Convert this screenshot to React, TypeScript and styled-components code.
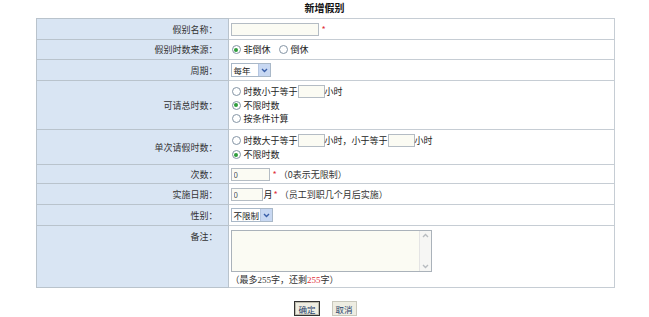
import React from 'react';
import styled, { createGlobalStyle } from 'styled-components';

const GlobalStyle = createGlobalStyle`
  body {
    margin: 0;
    background: #ffffff;
    font-family: "Noto Sans CJK SC", "Liberation Sans", sans-serif;
    font-size: 9px;
    color: #222222;
  }
`;

const Page = styled.div`
  width: 649px;
  display: flex;
  flex-direction: column;
  align-items: center;
`;

const Title = styled.div`
  height: 18px;
  line-height: 16px;
  font-size: 10px;
  font-weight: 700;
  color: #111111;
`;

const FormTable = styled.table`
  width: 579px;
  border-collapse: collapse;
  border: 1px solid #b9c3cc;
  margin-left: 1px;
`;

const Row = styled.tr<{ $h: number }>`
  height: ${(p) => p.$h}px;
`;

const Label = styled.td<{ $top?: boolean }>`
  width: 181px;
  padding: ${(p) => (p.$top ? '4px' : '0')} 10px 0 0;
  background: #d9e5f3;
  border: 1px solid #b9c3cc;
  text-align: right;
  vertical-align: ${(p) => (p.$top ? 'top' : 'middle')};
  color: #333333;
  white-space: nowrap;
`;

const Field = styled.td`
  padding: 0 0 0 2px;
  border: 1px solid #c6cdd4;
  background: #ffffff;
  vertical-align: middle;
`;

const Line = styled.div<{ $h?: number }>`
  display: flex;
  align-items: center;
  height: ${(p) => p.$h ?? 13}px;
  white-space: nowrap;
`;

const TextBox = styled.input<{ $w: number }>`
  width: ${(p) => p.$w}px;
  height: 13px;
  box-sizing: border-box;
  border: 1px solid #b4bcc4;
  background: #fbfbf3;
  padding: 0 2px;
  margin: 0;
  font-family: inherit;
  font-size: 8px;
  color: #555555;
  outline: none;
`;

const Star = styled.span`
  color: #e0303a;
  margin: 0 2px 0 3px;
`;

const Hint = styled.span`
  color: #333333;
`;

const RadioLabel = styled.label`
  display: inline-flex;
  align-items: center;
  margin-right: 7px;
`;

const Radio = styled.input.attrs({ type: 'radio' })`
  appearance: none;
  width: 9px;
  height: 9px;
  margin: 0 3px 0 1px;
  border: 1px solid #8595a5;
  border-radius: 50%;
  background: #ffffff;
  box-sizing: border-box;
  position: relative;
  &:checked::after {
    content: '';
    position: absolute;
    left: 1.5px;
    top: 1.5px;
    width: 4px;
    height: 4px;
    border-radius: 50%;
    background: #2f9e3c;
  }
`;

const SelectBox = styled.div<{ $w: number }>`
  width: ${(p) => p.$w}px;
  height: 14px;
  box-sizing: border-box;
  display: flex;
  align-items: center;
  border: 1px solid #a9b8c8;
  background: #ffffff;
  padding-left: 2px;
  font-size: 8.5px;
  color: #222222;
`;

const SelectText = styled.span`
  flex: 1;
`;

const SelectArrow = styled.span`
  width: 11px;
  height: 12px;
  display: flex;
  align-items: center;
  justify-content: center;
  background: #c8d8f2;
  border-left: 1px solid #b5c6e0;
`;

const TextArea = styled.div`
  width: 201px;
  height: 42px;
  margin-top: 4px;
  box-sizing: border-box;
  border: 1px solid #aab2ba;
  background: #fbfbf3;
  display: flex;
  justify-content: flex-end;
`;

const ScrollBar = styled.div`
  width: 11px;
  display: flex;
  flex-direction: column;
  justify-content: space-between;
  align-items: center;
  border-left: 1px solid #e4e4e4;
  background: #f6f6f4;
  padding: 2px 0;
`;

const Note = styled.div`
  height: 15px;
  display: flex;
  align-items: center;
  color: #333333;
`;

const Num = styled.span<{ $red?: boolean }>`
  font-family: "Liberation Serif", serif;
  color: ${(p) => (p.$red ? '#e0303a' : 'inherit')};
`;

const Buttons = styled.div`
  display: flex;
  gap: 12px;
  margin-top: 13px;
  margin-left: 2px;
`;

const Button = styled.button<{ $primary?: boolean }>`
  height: 15px;
  padding: 0 3px;
  font-family: inherit;
  font-size: 8.5px;
  color: #1f3f6a;
  background: #eeede2;
  border: 1px solid ${(p) => (p.$primary ? '#333333' : '#c9c8bc')};
  box-shadow: ${(p) => (p.$primary ? 'inset 0 0 0 1px #bdbcae' : 'none')};
  line-height: 12px;
`;

const Chevron = ({ up, color }: { up?: boolean; color: string }) => (
  <svg width="7" height="5" viewBox="0 0 7 5">
    <path
      d={up ? 'M1 4 L3.5 1.5 L6 4' : 'M1 1 L3.5 3.5 L6 1'}
      fill="none"
      stroke={color}
      strokeWidth="1.4"
    />
  </svg>
);

const Select = ({ value, width }: { value: string; width: number }) => (
  <SelectBox $w={width}>
    <SelectText>{value}</SelectText>
    <SelectArrow>
      <Chevron color="#3a5fa8" />
    </SelectArrow>
  </SelectBox>
);

const App: React.FC = () => (
  <>
    <GlobalStyle />
    <Page>
      <Title>新增假别</Title>
      <FormTable>
        <tbody>
          <Row $h={21}>
            <Label>假别名称：</Label>
            <Field>
              <Line>
                <TextBox $w={88} />
                <Star>*</Star>
              </Line>
            </Field>
          </Row>
          <Row $h={20}>
            <Label>假别时数来源：</Label>
            <Field>
              <Line>
                <RadioLabel>
                  <Radio name="src" defaultChecked />
                  非倒休
                </RadioLabel>
                <RadioLabel>
                  <Radio name="src" />
                  倒休
                </RadioLabel>
              </Line>
            </Field>
          </Row>
          <Row $h={21}>
            <Label>周期：</Label>
            <Field>
              <Select value="每年" width={40} />
            </Field>
          </Row>
          <Row $h={49}>
            <Label>可请总时数：</Label>
            <Field>
              <Line $h={13.5}>
                <RadioLabel style={{ marginRight: 0 }}>
                  <Radio name="total" />
                  时数小于等于
                </RadioLabel>
                <TextBox $w={27} />
                <span>小时</span>
              </Line>
              <Line $h={13.5}>
                <RadioLabel>
                  <Radio name="total" defaultChecked />
                  不限时数
                </RadioLabel>
              </Line>
              <Line $h={13.5}>
                <RadioLabel>
                  <Radio name="total" />
                  按条件计算
                </RadioLabel>
              </Line>
            </Field>
          </Row>
          <Row $h={35}>
            <Label>单次请假时数：</Label>
            <Field>
              <Line $h={15}>
                <RadioLabel style={{ marginRight: 0 }}>
                  <Radio name="single" />
                  时数大于等于
                </RadioLabel>
                <TextBox $w={27} />
                <span>小时，小于等于</span>
                <TextBox $w={27} />
                <span>小时</span>
              </Line>
              <Line $h={14}>
                <RadioLabel>
                  <Radio name="single" defaultChecked />
                  不限时数
                </RadioLabel>
              </Line>
            </Field>
          </Row>
          <Row $h={19}>
            <Label>次数：</Label>
            <Field>
              <Line>
                <TextBox $w={39} defaultValue="0" />
                <Star>*</Star>
                <Hint>（0表示无限制）</Hint>
              </Line>
            </Field>
          </Row>
          <Row $h={21}>
            <Label>实施日期：</Label>
            <Field>
              <Line>
                <TextBox $w={32} defaultValue="0" />
                <span style={{ marginLeft: 1 }}>月</span>
                <Star style={{ marginLeft: 1 }}>*</Star>
                <Hint>（员工到职几个月后实施）</Hint>
              </Line>
            </Field>
          </Row>
          <Row $h={21}>
            <Label>性别：</Label>
            <Field>
              <Select value="不限制" width={42} />
            </Field>
          </Row>
          <Row $h={62}>
            <Label $top>备注：</Label>
            <Field style={{ verticalAlign: 'top' }}>
              <TextArea>
                <ScrollBar>
                  <Chevron up color="#b8bcc0" />
                  <Chevron color="#b8bcc0" />
                </ScrollBar>
              </TextArea>
              <Note>
                （最多<Num>255</Num>字，还剩<Num $red>255</Num>字）
              </Note>
            </Field>
          </Row>
        </tbody>
      </FormTable>
      <Buttons>
        <Button $primary>确定</Button>
        <Button>取消</Button>
      </Buttons>
    </Page>
  </>
);

export default App;
